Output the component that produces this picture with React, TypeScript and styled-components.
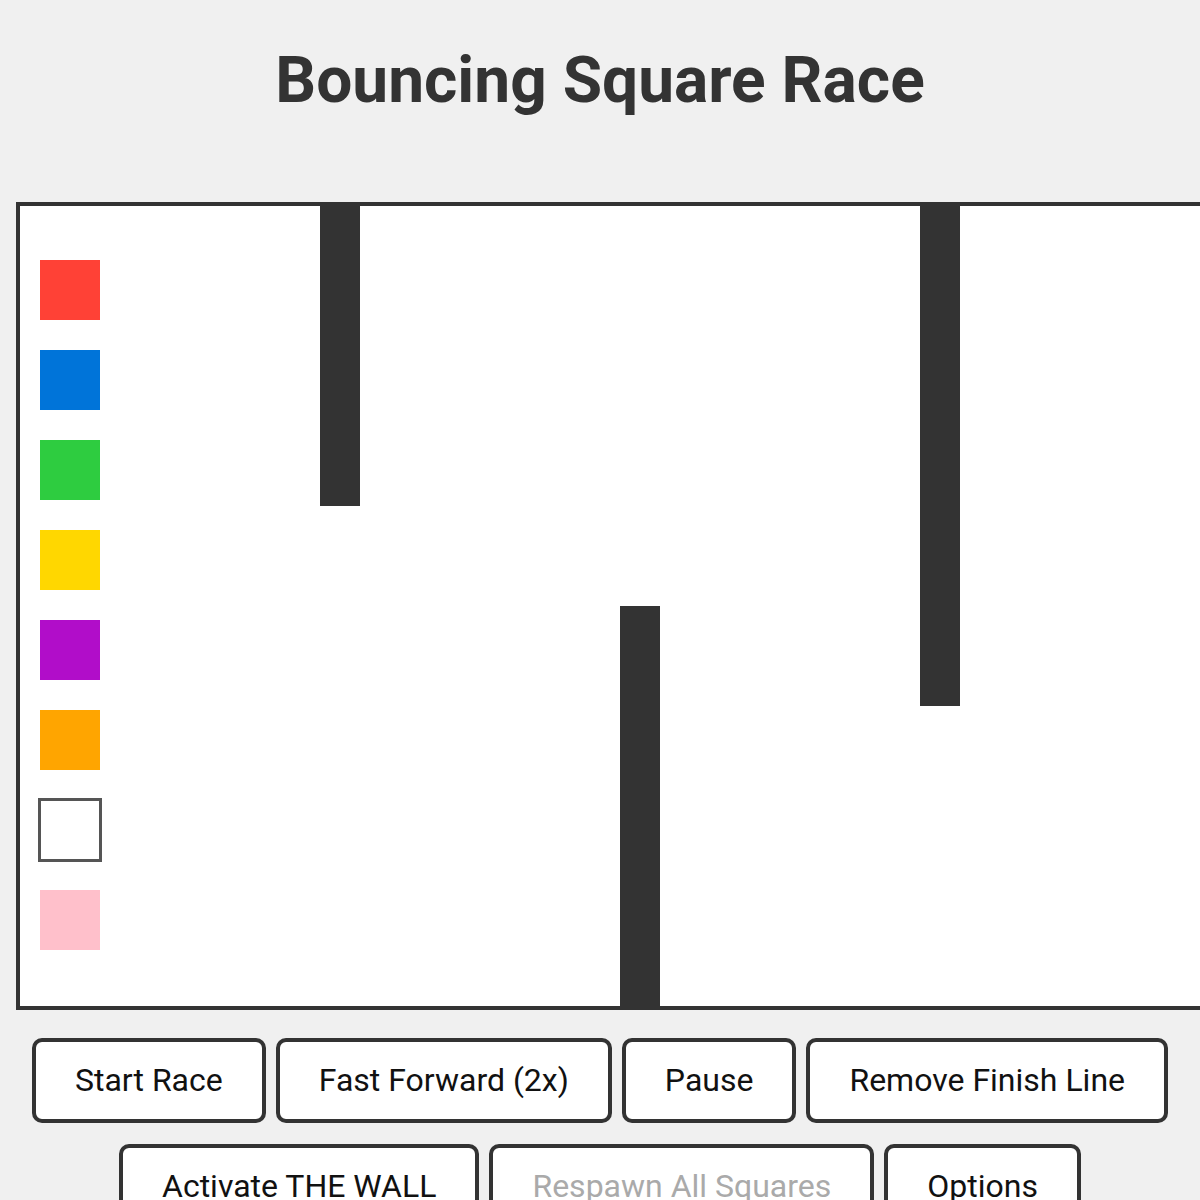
import React from 'react'
import styled, { createGlobalStyle } from 'styled-components'

const GlobalStyle = createGlobalStyle`
  html, body {
    overflow: hidden;
  }

  body {
    margin: 0;
    padding: 0 16px;
    background: #f0f0f0;
    font-family: Roboto, "Liberation Sans", sans-serif;
  }
`

const Title = styled.h1`
  margin: 43px 0 84px;
  font-size: 64px;
  font-weight: 700;
  line-height: normal;
  text-align: center;
  color: #333;
`

const Arena = styled.div`
  width: 1200px;
  height: 800px;
  border: 4px solid #333;
  background: #fff;

  svg {
    display: block;
  }
`

const Controls = styled.div`
  display: flex;
  flex-wrap: wrap;
  justify-content: center;
  column-gap: 10px;
  row-gap: 21px;
  margin-top: 28px;
`

const Button = styled.button`
  padding: 19px 39px 20px;
  border: 4px solid #333;
  border-radius: 10px;
  background: #fff;
  font-family: Roboto, "Liberation Sans", sans-serif;
  font-size: 32px;
  line-height: 38px;
  color: #111;
  cursor: pointer;

  &:disabled {
    color: #aaa;
    cursor: default;
  }
`

const racers = [
  { color: '#ff4136' },
  { color: '#0074d9' },
  { color: '#2ecc40' },
  { color: '#ffd700' },
  { color: '#b10dc9' },
  { color: '#ffa500' },
  { color: '#ffffff', outline: true },
  { color: '#ffc0cb' },
]

const walls = [
  { x: 300, y: 0, h: 300 },
  { x: 600, y: 400, h: 400 },
  { x: 900, y: 0, h: 500 },
]

function RaceField() {
  return (
    <Arena>
      <svg width="1200" height="800" viewBox="0 0 1200 800">
        {walls.map((w, idx) => (
          <rect key={idx} x={w.x} y={w.y} width={40} height={w.h} fill="#333" />
        ))}
        {racers.map((r, idx) => {
          const y = 54 + idx * 90
          return r.outline ? (
            <rect
              key={idx}
              x={19.5}
              y={y - 0.5}
              width={61}
              height={61}
              fill={r.color}
              stroke="#555"
              strokeWidth={3}
            />
          ) : (
            <rect key={idx} x={20} y={y} width={60} height={60} fill={r.color} />
          )
        })}
      </svg>
    </Arena>
  )
}

export default function App() {
  return (
    <>
      <GlobalStyle />
      <Title>Bouncing Square Race</Title>
      <RaceField />
      <Controls>
        <Button>Start Race</Button>
        <Button>Fast Forward (2x)</Button>
        <Button>Pause</Button>
        <Button>Remove Finish Line</Button>
        <Button>Activate THE WALL</Button>
        <Button disabled>Respawn All Squares</Button>
        <Button>Options</Button>
      </Controls>
    </>
  )
}
